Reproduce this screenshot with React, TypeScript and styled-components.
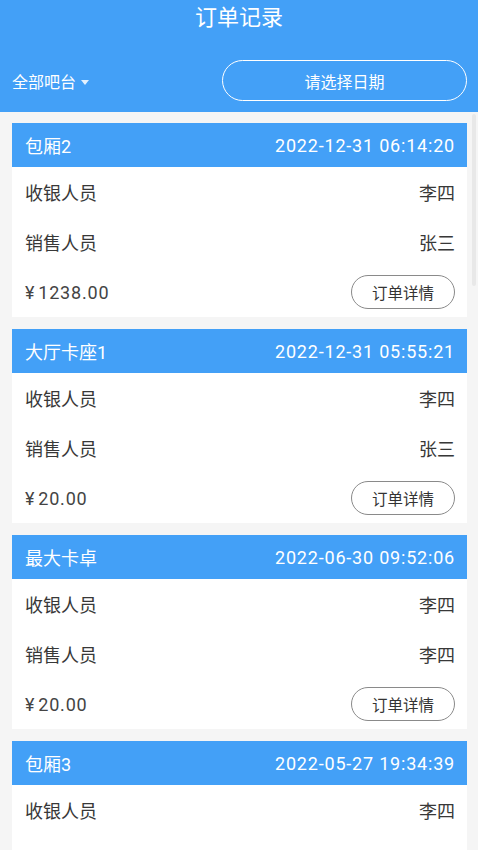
import React from 'react';
import styled, { createGlobalStyle } from 'styled-components';

const GlobalStyle = createGlobalStyle`
    html, body {
        margin: 0;
        padding: 0;
        background: #f5f5f5;
        font-family: Roboto, "Noto Sans CJK SC", sans-serif;
    }
`;

const BLUE = '#43a0f7';

const Page = styled.div`
    width: 478px;
    height: 850px;
    overflow: hidden;
    position: relative;
    background: #f5f5f5;
`;

const Header = styled.header`
    background: ${BLUE};
    height: 112px;
    display: flex;
    flex-direction: column;
    color: #fff;
`;

const Title = styled.h1`
    margin: 0;
    height: 36px;
    line-height: 36px;
    text-align: center;
    font-size: 22px;
    font-weight: 400;
`;

const FilterBar = styled.div`
    display: flex;
    align-items: center;
    justify-content: space-between;
    padding: 24px 11px 0 12px;
`;

const BarSelect = styled.div`
    display: flex;
    align-items: center;
    gap: 5px;
    font-size: 16px;
`;

const Caret = styled.span`
    width: 0;
    height: 0;
    border-left: 4.5px solid transparent;
    border-right: 4.5px solid transparent;
    border-top: 5px solid rgba(255, 255, 255, 0.85);
    margin-top: 4px;
`;

const DateButton = styled.button`
    width: 245px;
    height: 41px;
    border: 1.5px solid #fff;
    border-radius: 21px;
    background: transparent;
    color: #fff;
    font-family: inherit;
    font-size: 16px;
`;

const List = styled.div`
    display: flex;
    flex-direction: column;
    gap: 12px;
    padding: 11px 11px 0 12px;
`;

const Card = styled.section`
    background: #fff;
`;

const CardHead = styled.div`
    height: 44px;
    background: ${BLUE};
    color: #fff;
    display: flex;
    align-items: center;
    justify-content: space-between;
    padding: 0 12px 0 13px;
    font-size: 18px;
`;

const Stamp = styled.span`
    letter-spacing: 0.8px;
`;

const Row = styled.div`
    height: 50px;
    display: flex;
    align-items: center;
    justify-content: space-between;
    padding: 0 12px 0 13px;
    font-size: 18px;
    color: #383838;
`;

const Price = styled.span`
    color: #444;
    letter-spacing: 0.8px;
`;

const Yen = styled.span`
    margin-right: 3px;
`;

const DetailButton = styled.button`
    width: 104px;
    height: 34px;
    border: 1px solid #8a8a8a;
    border-radius: 17px;
    background: #fff;
    color: #333;
    font-family: inherit;
    font-size: 15.5px;
`;

const ScrollThumb = styled.div`
    position: absolute;
    right: 2px;
    top: 114px;
    width: 4px;
    height: 172px;
    border-radius: 2px;
    background: rgba(0, 0, 0, 0.05);
`;

type Order = {
    room: string;
    time: string;
    cashier: string;
    seller: string;
    amount: string;
};

const orders: Order[] = [
    { room: '包厢2', time: '2022-12-31 06:14:20', cashier: '李四', seller: '张三', amount: '1238.00' },
    { room: '大厅卡座1', time: '2022-12-31 05:55:21', cashier: '李四', seller: '张三', amount: '20.00' },
    { room: '最大卡卓', time: '2022-06-30 09:52:06', cashier: '李四', seller: '李四', amount: '20.00' },
    { room: '包厢3', time: '2022-05-27 19:34:39', cashier: '李四', seller: '张三', amount: '20.00' },
];

const OrderCard: React.FC<Order> = ({ room, time, cashier, seller, amount }) => (
    <Card>
        <CardHead>
            <span>{room}</span>
            <Stamp>{time}</Stamp>
        </CardHead>
        <Row>
            <span>收银人员</span>
            <span>{cashier}</span>
        </Row>
        <Row>
            <span>销售人员</span>
            <span>{seller}</span>
        </Row>
        <Row>
            <Price>
                <Yen>¥</Yen>
                {amount}
            </Price>
            <DetailButton>订单详情</DetailButton>
        </Row>
    </Card>
);

const App: React.FC = () => (
    <Page>
        <GlobalStyle />
        <Header>
            <Title>订单记录</Title>
            <FilterBar>
                <BarSelect>
                    全部吧台
                    <Caret />
                </BarSelect>
                <DateButton>请选择日期</DateButton>
            </FilterBar>
        </Header>
        <List>
            {orders.map((o) => (
                <OrderCard key={o.time} {...o} />
            ))}
        </List>
        <ScrollThumb />
    </Page>
);

export default App;
